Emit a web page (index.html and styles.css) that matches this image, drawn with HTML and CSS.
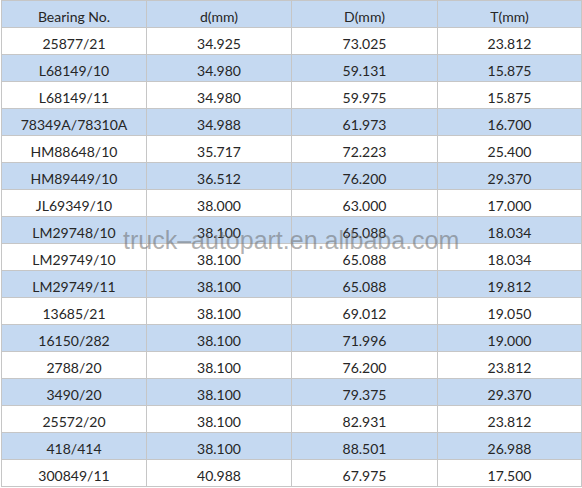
FILE: index.html
```html
<!DOCTYPE html>
<html>
<head>
<meta charset="utf-8">
<link rel="stylesheet" href="styles.css">
</head>
<body>
<div class="sheet">
<table class="spec">
<colgroup><col class="c1"><col class="c2"><col class="c3"><col class="c4"></colgroup>
<tr class="alt"><td>Bearing No.</td><td>d(mm)</td><td>D(mm)</td><td>T(mm)</td></tr>
<tr><td>25877/21</td><td>34.925</td><td>73.025</td><td>23.812</td></tr>
<tr class="alt"><td>L68149/10</td><td>34.980</td><td>59.131</td><td>15.875</td></tr>
<tr><td>L68149/11</td><td>34.980</td><td>59.975</td><td>15.875</td></tr>
<tr class="alt"><td>78349A/78310A</td><td>34.988</td><td>61.973</td><td>16.700</td></tr>
<tr><td>HM88648/10</td><td>35.717</td><td>72.223</td><td>25.400</td></tr>
<tr class="alt"><td>HM89449/10</td><td>36.512</td><td>76.200</td><td>29.370</td></tr>
<tr><td>JL69349/10</td><td>38.000</td><td>63.000</td><td>17.000</td></tr>
<tr class="alt"><td>LM29748/10</td><td>38.100</td><td>65.088</td><td>18.034</td></tr>
<tr><td>LM29749/10</td><td>38.100</td><td>65.088</td><td>18.034</td></tr>
<tr class="alt"><td>LM29749/11</td><td>38.100</td><td>65.088</td><td>19.812</td></tr>
<tr><td>13685/21</td><td>38.100</td><td>69.012</td><td>19.050</td></tr>
<tr class="alt"><td>16150/282</td><td>38.100</td><td>71.996</td><td>19.000</td></tr>
<tr><td>2788/20</td><td>38.100</td><td>76.200</td><td>23.812</td></tr>
<tr class="alt"><td>3490/20</td><td>38.100</td><td>79.375</td><td>29.370</td></tr>
<tr><td>25572/20</td><td>38.100</td><td>82.931</td><td>23.812</td></tr>
<tr class="alt"><td>418/414</td><td>38.100</td><td>88.501</td><td>26.988</td></tr>
<tr><td>300849/11</td><td>40.988</td><td>67.975</td><td>17.500</td></tr>
</table>
<div class="watermark">truck–autopart.en.alibaba.com</div>
</div>
</body>
</html>
```

FILE: styles.css
```css
html, body {
  margin: 0;
  padding: 0;
  background: #ffffff;
}
.sheet {
  position: relative;
  width: 582px;
  height: 488px;
  overflow: hidden;
}
.spec {
  border-collapse: collapse;
  table-layout: fixed;
  width: 581px;
  margin-left: 1px;
  font-family: Lato, "Open Sans", sans-serif;
  font-size: 14px;
  color: #262626;
}
.c1 { width: 145px; }
.c2 { width: 145px; }
.c3 { width: 146px; }
.c4 { width: 144px; }
.spec td {
  border: 1px solid #c6c6c6;
  height: 16px;
  line-height: 16px;
  padding: 8px 0 2px;
  text-align: center;
  white-space: nowrap;
}
.spec tr.alt td {
  background: #c5d9f1;
}
.watermark {
  position: absolute;
  left: 123px;
  top: 226px;
  font-family: "Liberation Sans", Arial, sans-serif;
  font-size: 25px;
  line-height: 29px;
  color: rgba(100, 100, 100, 0.5);
  white-space: nowrap;
}
```
